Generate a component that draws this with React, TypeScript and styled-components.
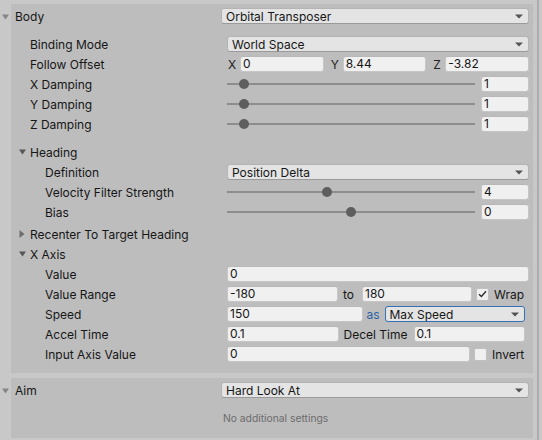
import styled, { createGlobalStyle } from 'styled-components';

const GlobalStyle = createGlobalStyle`
  html, body {
    margin: 0;
    background: #c8c8c8;
  }
  body {
    font-family: Inter, 'Noto Sans', sans-serif;
    font-size: 12px;
    color: #161616;
  }
`;

const Page = styled.div`
  display: flex;
  width: 542px;
  height: 440px;
  overflow: hidden;
`;

const Main = styled.div`
  flex: 1;
  display: flex;
  flex-direction: column;
  gap: 5px;
  padding-top: 4px;
`;

const Rail = styled.div`
  flex: none;
  width: 2px;
  margin: 0 3px 0 4px;
  background: #adadad;
`;

const Section = styled.section`
  display: flex;
`;

const Gutter = styled.div`
  flex: none;
  width: 11px;
  padding-top: 10px;
  display: flex;
  justify-content: center;
  align-items: flex-start;
`;

const Panel = styled.div<{ $bottom: number }>`
  flex: 1;
  background: #bdbdbd;
  padding: 2px 4px ${(p) => p.$bottom}px;
`;

const Row = styled.div<{ $col?: number; $top?: number }>`
  display: grid;
  grid-template-columns: ${(p) => p.$col ?? 212}px 1fr;
  align-items: center;
  height: 20px;
  margin-top: ${(p) => p.$top ?? 0}px;
`;

const Label = styled.div<{ $indent?: number }>`
  display: flex;
  align-items: center;
  padding-left: ${(p) => p.$indent ?? 0}px;
  white-space: nowrap;
`;

const Caret = styled.span`
  display: flex;
  align-items: center;
  width: 12px;
  height: 12px;
  padding-left: 1px;
  box-sizing: border-box;
`;

const Controls = styled.div<{ $gap?: number; $right?: number }>`
  display: flex;
  align-items: center;
  gap: ${(p) => p.$gap ?? 0}px;
  margin-right: ${(p) => p.$right ?? 0}px;
  min-width: 0;
`;

const Select = styled.div<{ $focus?: boolean; $w?: number }>`
  flex: ${(p) => (p.$w ? `0 0 ${p.$w}px` : '1 1 0')};
  min-width: 0;
  height: 16px;
  box-sizing: border-box;
  display: flex;
  align-items: center;
  justify-content: space-between;
  padding: 0 5px 0 4px;
  background: #e4e4e4;
  border: 1px solid ${(p) => (p.$focus ? '#3470b4' : '#b4b4b4')};
  border-bottom-color: ${(p) => (p.$focus ? '#3470b4' : '#9a9a9a')};
  border-radius: 3px;
  white-space: nowrap;
`;

const Field = styled.div<{ $w?: number }>`
  flex: ${(p) => (p.$w ? `0 0 ${p.$w}px` : '1 1 0')};
  min-width: 0;
  height: 16px;
  box-sizing: border-box;
  padding: 0 2px;
  background: #f0f0f0;
  border: 1px solid #c6c6c6;
  border-top-color: #b8b8b8;
  border-radius: 3px;
  line-height: 14px;
  white-space: nowrap;
  overflow: hidden;
`;

const Axis = styled.span`
  flex: 0 0 12px;
  padding-left: 1px;
  color: #222;
`;

const Group = styled.div`
  flex: 1 1 0;
  display: flex;
  align-items: center;
  min-width: 0;
`;

const Track = styled.div`
  flex: 1 1 0;
  position: relative;
  height: 12px;
  &::before {
    content: '';
    position: absolute;
    left: 0;
    right: 0;
    top: 5px;
    height: 2px;
    background: #8d8d8d;
  }
`;

const Thumb = styled.span`
  position: absolute;
  top: 1px;
  width: 10px;
  height: 10px;
  margin-left: -5px;
  border-radius: 50%;
  background: #5e5e5e;
`;

const Word = styled.span<{ $w: number; $pad?: number; $blue?: boolean }>`
  flex: 0 0 ${(p) => p.$w}px;
  padding-left: ${(p) => p.$pad ?? 0}px;
  box-sizing: border-box;
  color: ${(p) => (p.$blue ? '#2f63a8' : '#161616')};
  white-space: nowrap;
`;

const Box = styled.span`
  flex: 0 0 13px;
  height: 13px;
  box-sizing: border-box;
  display: flex;
  align-items: center;
  justify-content: center;
  background: #f0f0f0;
  border: 1px solid #c0c0c0;
  border-radius: 2px;
`;

const Note = styled.div`
  grid-column: 2;
  padding-left: 2px;
  font-size: 10.3px;
  color: #6c6c6c;
`;

const Tri = ({ dir = 'down', color }: { dir?: 'down' | 'right'; color: string }) =>
  dir === 'down' ? (
    <svg width="7" height="6" viewBox="0 0 7 6">
      <path d="M0 0.5 H7 L3.5 5.5 Z" fill={color} />
    </svg>
  ) : (
    <svg width="6" height="8" viewBox="0 0 6 8">
      <path d="M0.5 0 V8 L5.5 4 Z" fill={color} />
    </svg>
  );

const Arrow = () => (
  <svg width="8" height="5" viewBox="0 0 8 5">
    <path d="M0 0.5 H8 L4 4.5 Z" fill="#545454" />
  </svg>
);

const Check = () => (
  <svg width="9" height="8" viewBox="0 0 9 8">
    <path d="M1 4.2 L3.4 6.5 L8 1.2" stroke="#2a2a2a" strokeWidth="1.3" fill="none" />
  </svg>
);

const Dropdown = ({ text, focus, w }: { text: string; focus?: boolean; w?: number }) => (
  <Select $focus={focus} $w={w}>
    <span>{text}</span>
    <Arrow />
  </Select>
);

const Slider = ({ value, min, max }: { value: number; min: number; max: number }) => {
  const f = (value - min) / (max - min);
  return (
    <Controls $gap={6}>
      <Track>
        <Thumb style={{ left: `calc(5px + (100% - 10px) * ${f})` }} />
      </Track>
      <Field $w={48}>{value}</Field>
    </Controls>
  );
};

const App = () => {
  return (
    <>
      <GlobalStyle />
      <Page>
        <Main>
          <Section>
            <Gutter>
              <Tri color="#858585" />
            </Gutter>
            <Panel $bottom={9}>
              <Row $col={206}>
                <Label>Body</Label>
                <Dropdown text="Orbital Transposer" />
              </Row>

              <Row $top={8}>
                <Label $indent={15}>Binding Mode</Label>
                <Dropdown text="World Space" />
              </Row>
              <Row>
                <Label $indent={15}>Follow Offset</Label>
                <Controls $gap={6}>
                  <Group>
                    <Axis>X</Axis>
                    <Field>0</Field>
                  </Group>
                  <Group>
                    <Axis>Y</Axis>
                    <Field>8.44</Field>
                  </Group>
                  <Group>
                    <Axis>Z</Axis>
                    <Field>-3.82</Field>
                  </Group>
                </Controls>
              </Row>
              {['X Damping', 'Y Damping', 'Z Damping'].map((l) => (
                <Row key={l}>
                  <Label $indent={15}>{l}</Label>
                  <Slider value={1} min={0} max={20} />
                </Row>
              ))}

              <Row $top={8}>
                <Label $indent={3}>
                  <Caret>
                    <Tri color="#575757" />
                  </Caret>
                  Heading
                </Label>
              </Row>
              <Row>
                <Label $indent={30}>Definition</Label>
                <Dropdown text="Position Delta" />
              </Row>
              <Row>
                <Label $indent={30}>Velocity Filter Strength</Label>
                <Slider value={4} min={0} max={10} />
              </Row>
              <Row>
                <Label $indent={30}>Bias</Label>
                <Slider value={0} min={-180} max={180} />
              </Row>

              <Row $top={2}>
                <Label $indent={3}>
                  <Caret>
                    <Tri dir="right" color="#6e6e6e" />
                  </Caret>
                  Recenter To Target Heading
                </Label>
              </Row>
              <Row>
                <Label $indent={3}>
                  <Caret>
                    <Tri color="#575757" />
                  </Caret>
                  X Axis
                </Label>
              </Row>
              <Row>
                <Label $indent={30}>Value</Label>
                <Field>0</Field>
              </Row>
              <Row>
                <Label $indent={30}>Value Range</Label>
                <Controls $right={4}>
                  <Field $w={111}>-180</Field>
                  <Word $w={24} $pad={5}>to</Word>
                  <Field $w={110}>180</Field>
                  <Controls $gap={4}>
                    <span />
                    <Box>
                      <Check />
                    </Box>
                    <Word $w={28} $pad={1}>Wrap</Word>
                  </Controls>
                </Controls>
              </Row>
              <Row>
                <Label $indent={30}>Speed</Label>
                <Controls $right={4}>
                  <Field>150</Field>
                  <Word $w={22} $pad={4} $blue>as</Word>
                  <Dropdown text="Max Speed" focus />
                </Controls>
              </Row>
              <Row>
                <Label $indent={30}>Accel Time</Label>
                <Controls $right={4}>
                  <Field>0.1</Field>
                  <Word $w={75} $pad={5}>Decel Time</Word>
                  <Field>0.1</Field>
                </Controls>
              </Row>
              <Row>
                <Label $indent={30}>Input Axis Value</Label>
                <Controls $right={4}>
                  <Field>0</Field>
                  <Controls $gap={4}>
                    <span />
                    <Box />
                    <Word $w={34} $pad={1}>Invert</Word>
                  </Controls>
                </Controls>
              </Row>
            </Panel>
          </Section>

          <Section>
            <Gutter>
              <Tri color="#858585" />
            </Gutter>
            <Panel $bottom={10}>
              <Row $col={206}>
                <Label>Aim</Label>
                <Dropdown text="Hard Look At" />
              </Row>
              <Row $col={206} $top={8}>
                <Note>No additional settings</Note>
              </Row>
            </Panel>
          </Section>
        </Main>
        <Rail />
      </Page>
    </>
  );
};

export default App;
